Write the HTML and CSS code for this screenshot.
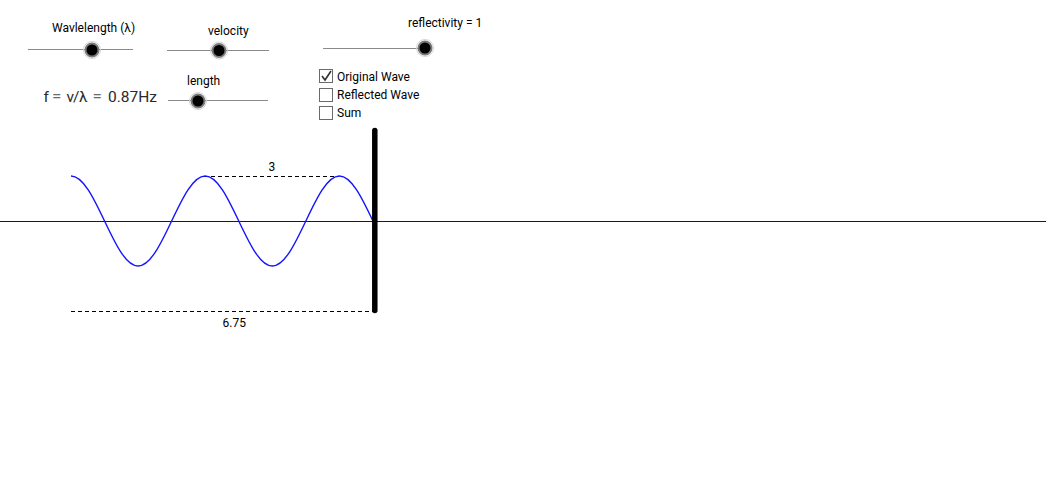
FILE: index.html
```html
<!DOCTYPE html>
<html lang="en">
<head>
<meta charset="utf-8">
<title>Standing wave applet</title>
<link rel="stylesheet" href="styles.css">
</head>
<body>
<main class="stage">
  <svg class="canvas" width="1048" height="480" viewBox="0 0 1048 480" xmlns="http://www.w3.org/2000/svg">
    <!-- axis -->
    <line class="axis" x1="0" y1="221.5" x2="1046" y2="221.5"/>
    <!-- dashed measures -->
    <line class="dash" x1="204" y1="176.5" x2="339" y2="176.5"/>
    <line class="dash" x1="71" y1="311.5" x2="373" y2="311.5"/>
    <text class="lbl" x="268.5" y="171">3</text>
    <text class="lbl" x="222.5" y="327">6.75</text>
    <!-- wave -->
    <path class="wave" d="M71 176
      c 12.14 0 22.61 21.95 33.55 45
      c 10.94 23.05 21.41 45 33.55 45
      c 12.14 0 22.61 -21.95 33.55 -45
      c 10.94 -23.05 21.41 -45 33.55 -45
      c 12.14 0 22.61 21.95 33.55 45
      c 10.94 23.05 21.41 45 33.55 45
      c 12.14 0 22.61 -21.95 33.55 -45
      c 10.94 -23.05 21.41 -45 33.55 -45
      c 12.14 0 22.61 21.95 33.55 45"/>
    <!-- wall -->
    <line class="wall" x1="374.8" y1="130.5" x2="374.8" y2="310.5"/>

    <!-- sliders -->
    <g class="slider">
      <line class="track" x1="28" y1="49.5" x2="133" y2="49.5"/>
      <circle class="halo" cx="92" cy="50" r="8.5"/>
      <circle class="knob" cx="92" cy="50" r="6.5"/>
    </g>
    <text class="lbl" x="52" y="32">Wavlelength (λ)</text>

    <g class="slider">
      <line class="track" x1="167" y1="50.5" x2="269" y2="50.5"/>
      <circle class="halo" cx="219" cy="50.5" r="8.5"/>
      <circle class="knob" cx="219" cy="50.5" r="6.5"/>
    </g>
    <text class="lbl" x="208" y="34.5">velocity</text>

    <g class="slider">
      <line class="track" x1="323" y1="48.5" x2="425" y2="48.5"/>
      <circle class="halo" cx="425" cy="48" r="8.5"/>
      <circle class="knob" cx="425" cy="48" r="6.5"/>
    </g>
    <text class="lbl" x="408" y="27">reflectivity = 1</text>

    <g class="slider">
      <line class="track" x1="168" y1="100.5" x2="268" y2="100.5"/>
      <circle class="halo" cx="198" cy="101" r="8.5"/>
      <circle class="knob" cx="198" cy="101" r="6.5"/>
    </g>
    <text class="lbl" x="187" y="85">length</text>

    <text class="formula" y="101.5"><tspan x="43.5">f</tspan><tspan class="eq" x="52">=</tspan><tspan x="66.5">v</tspan><tspan x="73">/</tspan><tspan x="79">λ</tspan><tspan class="eq" x="92.5">=</tspan><tspan x="108">0.87Hz</tspan></text>

    <!-- checkboxes -->
    <rect class="box" x="319.5" y="69.5" width="13" height="13"/>
    <path class="tick" d="M322 76 L325 80 L331 71"/>
    <text class="lbl" x="337" y="80.5">Original Wave</text>
    <rect class="box" x="319.5" y="88.5" width="13" height="13"/>
    <text class="lbl" x="337" y="98.5">Reflected Wave</text>
    <rect class="box" x="319.5" y="106.5" width="13" height="13"/>
    <text class="lbl" x="337" y="116.5">Sum</text>
  </svg>
</main>
</body>
</html>
```
FILE: styles.css
```css
html, body {
  margin: 0;
  padding: 0;
  background: #ffffff;
}

.stage {
  position: relative;
  width: 1048px;
  height: 480px;
  overflow: hidden;
  background: #ffffff;
}

.canvas {
  display: block;
}

.axis {
  stroke: #1a1a1a;
  stroke-width: 1;
}

.dash {
  stroke: #000000;
  stroke-width: 1;
  stroke-dasharray: 4 3;
}

.wave {
  fill: none;
  stroke: #1414ff;
  stroke-width: 1.4;
}

.wall {
  stroke: #000000;
  stroke-width: 5.5;
  stroke-linecap: round;
}

.track {
  stroke: #8a8a8a;
  stroke-width: 1;
}

.halo {
  fill: none;
  stroke: #d4d4d4;
  stroke-width: 1;
}

.knob {
  fill: #000000;
  stroke: #7a7a7a;
  stroke-width: 2;
}

.lbl {
  font-family: Roboto, "Liberation Sans", sans-serif;
  font-size: 12px;
  fill: #000000;
}

.formula {
  font-family: Roboto, "Liberation Sans", sans-serif;
  font-size: 15.5px;
  fill: #2a2a2a;
}

.formula .eq {
  fill: #6a6a6a;
  font-size: 17px;
}

.box {
  fill: #ffffff;
  stroke: #6a6a6a;
  stroke-width: 1;
}

.tick {
  fill: none;
  stroke: #333333;
  stroke-width: 1.6;
}
```
